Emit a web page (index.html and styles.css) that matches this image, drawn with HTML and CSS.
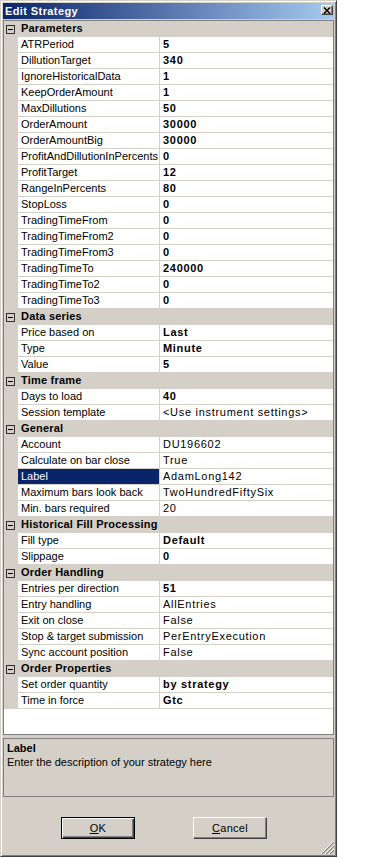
FILE: index.html
```html
<!DOCTYPE html>
<html>
<head>
<meta charset="utf-8">
<link rel="stylesheet" href="styles.css">
</head>
<body>
<div class="window">
  <div class="titlebar">
    <span class="title">Edit Strategy</span>
    <span class="close"><svg width="8" height="7" viewBox="0 0 8 7"><path d="M1 0.5 L7 6.5 M7 0.5 L1 6.5" stroke="#000" stroke-width="1.4" fill="none"/></svg></span>
  </div>
  <div class="grid">
    <div class="cat"><span class="toggle"></span><span class="cat-name">Parameters</span></div>
    <div class="row"><span class="name">ATRPeriod</span><span class="value b">5</span></div>
    <div class="row"><span class="name">DillutionTarget</span><span class="value b">340</span></div>
    <div class="row"><span class="name">IgnoreHistoricalData</span><span class="value b">1</span></div>
    <div class="row"><span class="name">KeepOrderAmount</span><span class="value b">1</span></div>
    <div class="row"><span class="name">MaxDillutions</span><span class="value b">50</span></div>
    <div class="row"><span class="name">OrderAmount</span><span class="value b">30000</span></div>
    <div class="row"><span class="name">OrderAmountBig</span><span class="value b">30000</span></div>
    <div class="row"><span class="name">ProfitAndDillutionInPercents</span><span class="value b">0</span></div>
    <div class="row"><span class="name">ProfitTarget</span><span class="value b">12</span></div>
    <div class="row"><span class="name">RangeInPercents</span><span class="value b">80</span></div>
    <div class="row"><span class="name">StopLoss</span><span class="value b">0</span></div>
    <div class="row"><span class="name">TradingTimeFrom</span><span class="value b">0</span></div>
    <div class="row"><span class="name">TradingTimeFrom2</span><span class="value b">0</span></div>
    <div class="row"><span class="name">TradingTimeFrom3</span><span class="value b">0</span></div>
    <div class="row"><span class="name">TradingTimeTo</span><span class="value b">240000</span></div>
    <div class="row"><span class="name">TradingTimeTo2</span><span class="value b">0</span></div>
    <div class="row"><span class="name">TradingTimeTo3</span><span class="value b">0</span></div>
    <div class="cat"><span class="toggle"></span><span class="cat-name">Data series</span></div>
    <div class="row"><span class="name">Price based on</span><span class="value b">Last</span></div>
    <div class="row"><span class="name">Type</span><span class="value b">Minute</span></div>
    <div class="row"><span class="name">Value</span><span class="value b">5</span></div>
    <div class="cat"><span class="toggle"></span><span class="cat-name">Time frame</span></div>
    <div class="row"><span class="name">Days to load</span><span class="value b">40</span></div>
    <div class="row"><span class="name">Session template</span><span class="value">&lt;Use instrument settings&gt;</span></div>
    <div class="cat"><span class="toggle"></span><span class="cat-name">General</span></div>
    <div class="row"><span class="name">Account</span><span class="value">DU196602</span></div>
    <div class="row"><span class="name">Calculate on bar close</span><span class="value">True</span></div>
    <div class="row"><span class="name selected">Label</span><span class="value">AdamLong142</span></div>
    <div class="row"><span class="name">Maximum bars look back</span><span class="value">TwoHundredFiftySix</span></div>
    <div class="row"><span class="name">Min. bars required</span><span class="value">20</span></div>
    <div class="cat"><span class="toggle"></span><span class="cat-name">Historical Fill Processing</span></div>
    <div class="row"><span class="name">Fill type</span><span class="value b">Default</span></div>
    <div class="row"><span class="name">Slippage</span><span class="value b">0</span></div>
    <div class="cat"><span class="toggle"></span><span class="cat-name">Order Handling</span></div>
    <div class="row"><span class="name">Entries per direction</span><span class="value b">51</span></div>
    <div class="row"><span class="name">Entry handling</span><span class="value">AllEntries</span></div>
    <div class="row"><span class="name">Exit on close</span><span class="value">False</span></div>
    <div class="row"><span class="name">Stop &amp; target submission</span><span class="value">PerEntryExecution</span></div>
    <div class="row"><span class="name">Sync account position</span><span class="value">False</span></div>
    <div class="cat"><span class="toggle"></span><span class="cat-name">Order Properties</span></div>
    <div class="row"><span class="name">Set order quantity</span><span class="value b">by strategy</span></div>
    <div class="row"><span class="name">Time in force</span><span class="value b">Gtc</span></div>
  </div>
  <div class="help">
    <div class="help-title">Label</div>
    <div class="help-text">Enter the description of your strategy here</div>
  </div>
  <div class="buttons">
    <button class="btn default"><u>O</u>K</button>
    <button class="btn"><u>C</u>ancel</button>
  </div>
  <svg class="grip" width="14" height="14" viewBox="0 0 14 14">
    <path d="M13 1 L1 13 M13 5 L5 13 M13 9 L9 13" stroke="#808080" stroke-width="1.2" fill="none"/>
    <path d="M13 0 L0 13 M13 4 L4 13 M13 8 L8 13" stroke="#ffffff" stroke-width="0.9" fill="none"/>
  </svg>
</div>
</body>
</html>
```
FILE: styles.css
```css
* { box-sizing: border-box; }
html, body { margin: 0; padding: 0; background: #ffffff; }
body {
  font-family: "Liberation Sans", Arial, sans-serif;
  font-size: 11px;
  color: #000;
}
.window {
  position: relative;
  width: 337px;
  height: 857px;
  background: #d4d0c8;
  border: 1px solid;
  border-color: #d4d0c8 #404040 #404040 #d4d0c8;
  box-shadow: inset 1px 1px #ffffff, inset -1px -1px #808080;
  padding: 2px;
  display: flex;
  flex-direction: column;
}
.titlebar {
  height: 16px;
  margin-bottom: 1px;
  background: linear-gradient(to right, #0a246a, #a6caf0);
  display: flex;
  align-items: flex-start;
  justify-content: space-between;
  padding-left: 2px;
}
.title {
  color: #fff;
  font-weight: bold;
  line-height: 16px;
  letter-spacing: 0.4px;
}
.close {
  width: 12px;
  height: 10px;
  margin-top: 2px;
  margin-right: 1px;
  background: #d4d0c8;
  border: 1px solid;
  border-color: #ffffff #404040 #404040 #ffffff;
  box-shadow: inset -1px -1px #808080;
  display: flex;
  align-items: center;
  justify-content: center;
}
.close svg { display: block; }
.grid {
  height: 715px;
  border: 1px solid #808080;
  background: #ffffff;
  overflow: hidden;
}
.row {
  display: flex;
  height: 16px;
  padding-left: 14px;
  background: #d4d0c8;
}
.name, .value {
  height: 16px;
  line-height: 15px;
  border-bottom: 1px solid #d4d0c8;
  background: #fff;
  white-space: nowrap;
  overflow: hidden;
}
.name {
  width: 142px;
  flex: none;
  border-right: 1px solid #d4d0c8;
  padding-left: 3px;
}
.name.selected {
  background: #0a246a;
  color: #fff;
}
.value {
  flex: 1;
  padding-left: 3px;
  letter-spacing: 0.7px;
}
.value.b { font-weight: bold; }
.cat {
  display: flex;
  align-items: flex-start;
  height: 16px;
  background: #d4d0c8;
}
.toggle {
  position: relative;
  width: 9px;
  height: 9px;
  margin-left: 2px;
  margin-top: 4px;
  border: 1px solid #303030;
  flex: none;
}
.toggle::after {
  content: "";
  position: absolute;
  left: 1px;
  top: 3px;
  width: 5px;
  height: 1px;
  background: #000;
}
.cat-name {
  margin-left: 6px;
  font-weight: bold;
  line-height: 15px;
  letter-spacing: 0.2px;
}
.help {
  margin-top: 3px;
  height: 59px;
  border: 1px solid #808080;
  padding: 2px 3px;
}
.help-title { font-weight: bold; line-height: 14px; }
.help-text { line-height: 14px; }
.buttons {
  display: flex;
  margin-top: 20px;
  padding-left: 58px;
  gap: 58px;
}
.btn {
  width: 74px;
  height: 22px;
  padding: 0;
  margin: 0;
  background: #d4d0c8;
  font-family: "Liberation Sans", Arial, sans-serif;
  font-size: 11px;
  color: #000;
  border: 1px solid;
  border-color: #ffffff #404040 #404040 #ffffff;
  box-shadow: inset -1px -1px #808080;
  letter-spacing: 0.3px;
}
.btn.default {
  border: 1px solid #000;
  box-shadow: inset 1px 1px #ffffff, inset -1px -1px #404040, inset -2px -2px #808080;
}
.grip {
  position: absolute;
  right: 1px;
  bottom: 1px;
}
```
